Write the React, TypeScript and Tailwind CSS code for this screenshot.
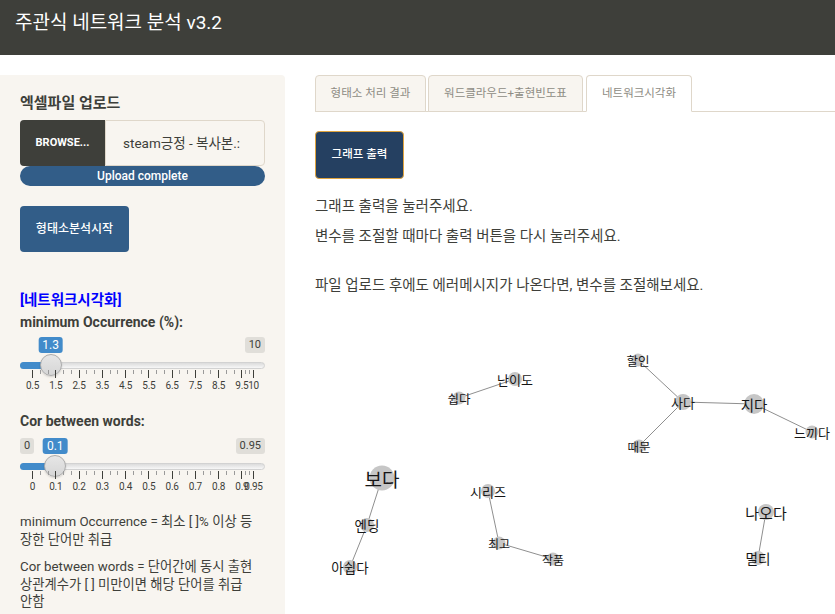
import React from "react";

type Tick = { v: number; label: string };

type SliderProps = {
  min: number;
  max: number;
  value: number;
  ticks: Tick[];
  showMin: boolean;
  minLabel: string;
  maxLabel: string;
  valueLabel: string;
};

function Slider({ min, max, value, ticks, showMin, minLabel, maxLabel, valueLabel }: SliderProps) {
  const gx0 = 12;
  const gw = 221;
  const pos = (v: number) => gx0 + ((v - min) / (max - min)) * gw;
  const hx = pos(value);
  const smalls: number[] = [];
  for (let i = 1; i < ticks.length; i++) {
    const a = pos(ticks[i - 1].v);
    const b = pos(ticks[i].v);
    for (let z = 1; z <= 2; z++) smalls.push(a + ((b - a) * z) / 3);
  }
  return (
    <div className="relative h-[58px] w-[245px]">
      {showMin && (
        <span className="absolute left-0 top-[1px] rounded-[3px] bg-[#e0ded9] px-[4px] text-[11px] leading-[16px] text-[#3e3f3a]">
          {minLabel}
        </span>
      )}
      <span className="absolute right-0 top-[1px] rounded-[3px] bg-[#e0ded9] px-[4px] text-[11px] leading-[16px] text-[#3e3f3a]">
        {maxLabel}
      </span>
      <span
        className="absolute top-[1px] -translate-x-1/2 rounded-[3px] bg-[#428bca] px-[4px] text-[12px] leading-[16px] text-white"
        style={{ left: hx }}
      >
        {valueLabel}
      </span>
      <div className="absolute left-0 right-0 top-[26px] h-[7px] rounded-full border border-[#d2d2d2] bg-linear-to-b from-[#dcdcdc] to-[#f7f7f7]" />
      <div className="absolute left-0 top-[26px] h-[7px] rounded-l-full bg-[#428bca]" style={{ width: hx }} />
      <div
        className="absolute top-[18px] h-[22px] w-[22px] -translate-x-1/2 rounded-full border border-[#ababab] bg-linear-to-b from-[#e6e6e6] to-[#d6d6d6] shadow-[0_1px_2px_rgba(0,0,0,0.15)]"
        style={{ left: hx }}
      />
      {ticks.map((t) => (
        <div key={"b" + t.label} className="absolute top-[34px] h-[8px] w-px bg-[#3e3f3a]" style={{ left: pos(t.v) }} />
      ))}
      {smalls.map((x, i) => (
        <div key={"s" + i} className="absolute top-[34px] h-[4px] w-px bg-[#9a9a9a]" style={{ left: x }} />
      ))}
      {ticks.map((t) => (
        <span
          key={"l" + t.label}
          className="absolute top-[44px] -translate-x-1/2 whitespace-nowrap text-[10px] leading-[12px] tracking-[-0.3px] text-[#3e3f3a]"
          style={{ left: pos(t.v) + 0.5 }}
        >
          {t.label}
        </span>
      ))}
    </div>
  );
}

const ticks1: Tick[] = [0.5, 1.5, 2.5, 3.5, 4.5, 5.5, 6.5, 7.5, 8.5, 9.5, 10].map((v) => ({ v, label: String(v) }));
const ticks2: Tick[] = [0, 0.1, 0.2, 0.3, 0.4, 0.5, 0.6, 0.7, 0.8, 0.9, 0.95].map((v) => ({ v, label: String(v) }));

type Node = { x: number; y: number; r: number; fs: number };
const OX = 315;
const OY = 320;
const nodes: Record<string, Node> = {
  난이도: { x: 515, y: 379, r: 7, fs: 13 },
  쉽다: { x: 459, y: 398, r: 6.5, fs: 12.5 },
  할인: { x: 638, y: 360, r: 6.5, fs: 12.5 },
  사다: { x: 683, y: 402, r: 8, fs: 13 },
  지다: { x: 754, y: 404, r: 10, fs: 14.5 },
  느끼다: { x: 812, y: 432, r: 6.5, fs: 13 },
  때문: { x: 639, y: 446, r: 6.5, fs: 12.5 },
  보다: { x: 382, y: 478, r: 12.5, fs: 19 },
  엔딩: { x: 367, y: 525, r: 7, fs: 13.5 },
  아쉽다: { x: 350, y: 567, r: 7, fs: 13.5 },
  시리즈: { x: 488, y: 491, r: 7, fs: 13 },
  최고: { x: 499, y: 543, r: 6.5, fs: 12 },
  작품: { x: 553, y: 559, r: 6.5, fs: 12 },
  나오다: { x: 766, y: 512, r: 8, fs: 15 },
  멀티: { x: 758, y: 558, r: 7, fs: 13.5 },
};
const edges: [string, string][] = [
  ["난이도", "쉽다"],
  ["할인", "사다"],
  ["사다", "때문"],
  ["사다", "지다"],
  ["지다", "느끼다"],
  ["보다", "엔딩"],
  ["엔딩", "아쉽다"],
  ["시리즈", "최고"],
  ["최고", "작품"],
  ["나오다", "멀티"],
];

function Graph() {
  return (
    <svg width={520} height={294} viewBox="0 0 520 294" className="mt-[24px] block">
      {edges.map(([a, b]) => (
        <line
          key={a + b}
          x1={nodes[a].x - OX}
          y1={nodes[a].y - OY}
          x2={nodes[b].x - OX}
          y2={nodes[b].y - OY}
          stroke="#8f8f8f"
          strokeWidth={1}
        />
      ))}
      {Object.entries(nodes).map(([k, n]) => (
        <circle key={"c" + k} cx={n.x - OX} cy={n.y - OY} r={n.r} fill="#c6c6c6" />
      ))}
      {Object.entries(nodes).map(([k, n]) => (
        <text
          key={"t" + k}
          x={n.x - OX}
          y={n.y - OY}
          fontSize={n.fs}
          textAnchor="middle"
          dominantBaseline="central"
          fill="#161616"
          fontFamily="'Noto Sans CJK KR', sans-serif"
        >
          {k}
        </text>
      ))}
    </svg>
  );
}

export default function App() {
  return (
    <div className="h-[614px] w-full overflow-hidden bg-white font-['Roboto','Noto_Sans_CJK_KR',sans-serif] text-[#3e3f3a]">
      <header className="h-[55px] bg-[#3e3f3a] pl-[15px] pt-[9px] text-[19px] leading-[28px] text-white">
        주관식 네트워크 분석 v3.2
      </header>
      <div className="flex pt-[20px]">
        <aside className="h-[600px] w-[285px] shrink-0 rounded-tr-[4px] bg-[#f8f5f0] px-[20px] pt-[18px]">
          <div className="text-[15px] font-bold leading-[20px]">엑셀파일 업로드</div>
          <div className="mt-[7px] flex h-[46px]">
            <div className="flex w-[85px] items-center justify-center rounded-l-[4px] bg-[#3e3f3a] text-[11px] font-bold text-white">
              BROWSE...
            </div>
            <div className="flex flex-1 items-center overflow-hidden whitespace-nowrap rounded-r-[4px] border border-[#dfd7ca] bg-[#f8f5f0] pl-[17px] text-[13.5px]">
              steam긍정 - 복사본.:
            </div>
          </div>
          <div className="h-[20px] rounded-full bg-[#325d88] text-center text-[12px] font-medium leading-[20px] text-white">
            Upload complete
          </div>
          <button className="mt-[20px] flex h-[46px] w-[109px] items-center justify-center rounded-[4px] bg-[#325d88] text-[12px] font-medium text-white">
            형태소분석시작
          </button>
          <div className="mt-[39px] text-[14.5px] font-bold leading-[20px] text-[#0000ff]">[네트워크시각화]</div>
          <div className="mt-[1px] text-[14px] font-bold leading-[20px]">minimum Occurrence (%):</div>
          <div className="mt-[4px]">
            <Slider min={0.5} max={10} value={1.3} ticks={ticks1} showMin={false} minLabel="0.5" maxLabel="10" valueLabel="1.3" />
          </div>
          <div className="mt-[17px] text-[14px] font-bold leading-[20px]">Cor between words:</div>
          <div className="mt-[6px]">
            <Slider min={0} max={0.95} value={0.1} ticks={ticks2} showMin={true} minLabel="0" maxLabel="0.95" valueLabel="0.1" />
          </div>
          <p className="mt-[18px] whitespace-nowrap text-[13.3px] leading-[17.5px]">
            minimum Occurrence = 최소 [ ]% 이상 등
            <br />
            장한 단어만 취급
          </p>
          <p className="mt-[10px] whitespace-nowrap text-[13.3px] leading-[17.5px]">
            Cor between words = 단어간에 동시 출현
            <br />
            상관계수가 [ ] 미만이면 해당 단어를 취급
            <br />
            안함
          </p>
        </aside>
        <main className="ml-[30px] flex-1">
          <div className="flex h-[37px] border-b border-[#dfd7ca]">
            <div className="-mb-px flex h-[37px] w-[111px] items-center justify-center rounded-t-[4px] border border-[#dfd7ca] bg-[#f8f5f0] text-[11.5px] text-[#8e8c84]">
              형태소 처리 결과
            </div>
            <div className="-mb-px ml-[2px] flex h-[37px] w-[155px] items-center justify-center rounded-t-[4px] border border-[#dfd7ca] bg-[#f8f5f0] text-[11.5px] text-[#8e8c84]">
              워드클라우드+출현빈도표
            </div>
            <div className="-mb-px ml-[3px] flex h-[37px] w-[106px] items-center justify-center rounded-t-[4px] border border-[#dfd7ca] border-b-white bg-white text-[11.5px] text-[#8e8c84]">
              네트워크시각화
            </div>
          </div>
          <button className="mt-[19px] flex h-[48px] w-[89px] items-center justify-center rounded-[4px] border border-[#e0a43e] bg-[#254061] text-[11.5px] font-medium text-white">
            그래프 출력
          </button>
          <p className="mt-[18px] text-[14.5px] leading-[20px]">그래프 출력을 눌러주세요.</p>
          <p className="mt-[10px] text-[14.5px] leading-[20px]">변수를 조절할 때마다 출력 버튼을 다시 눌러주세요.</p>
          <p className="mt-[29px] text-[14.5px] leading-[20px]">파일 업로드 후에도 에러메시지가 나온다면, 변수를 조절해보세요.</p>
          <Graph />
        </main>
      </div>
    </div>
  );
}
